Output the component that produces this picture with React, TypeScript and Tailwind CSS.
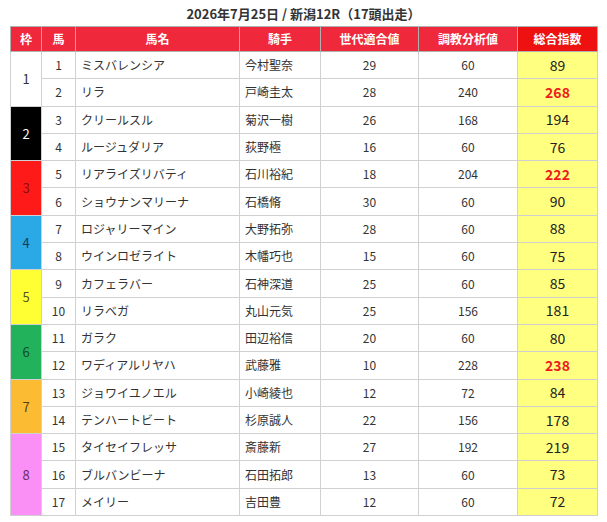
import React from "react";

type Row = { no: number; name: string; jockey: string; gen: number; train: number; total: number; hot?: boolean };

const frames: { waku: number; bg: string; fg: string; rows: Row[] }[] = [
  {
    waku: 1, bg: "bg-white", fg: "text-[#333]",
    rows: [
      { no: 1, name: "ミスバレンシア", jockey: "今村聖奈", gen: 29, train: 60, total: 89 },
      { no: 2, name: "リラ", jockey: "戸崎圭太", gen: 28, train: 240, total: 268, hot: true },
    ],
  },
  {
    waku: 2, bg: "bg-black", fg: "text-white",
    rows: [
      { no: 3, name: "クリールスル", jockey: "菊沢一樹", gen: 26, train: 168, total: 194 },
      { no: 4, name: "ルージュダリア", jockey: "荻野極", gen: 16, train: 60, total: 76 },
    ],
  },
  {
    waku: 3, bg: "bg-[#ff1a1a]", fg: "text-[#8a1010]",
    rows: [
      { no: 5, name: "リアライズリバティ", jockey: "石川裕紀", gen: 18, train: 204, total: 222, hot: true },
      { no: 6, name: "ショウナンマリーナ", jockey: "石橋脩", gen: 30, train: 60, total: 90 },
    ],
  },
  {
    waku: 4, bg: "bg-[#2aa9e6]", fg: "text-[#1d3a55]",
    rows: [
      { no: 7, name: "ロジャリーマイン", jockey: "大野拓弥", gen: 28, train: 60, total: 88 },
      { no: 8, name: "ウインロゼライト", jockey: "木幡巧也", gen: 15, train: 60, total: 75 },
    ],
  },
  {
    waku: 5, bg: "bg-[#ffff33]", fg: "text-[#555522]",
    rows: [
      { no: 9, name: "カフェラバー", jockey: "石神深道", gen: 25, train: 60, total: 85 },
      { no: 10, name: "リラベガ", jockey: "丸山元気", gen: 25, train: 156, total: 181 },
    ],
  },
  {
    waku: 6, bg: "bg-[#22b25c]", fg: "text-[#124a2a]",
    rows: [
      { no: 11, name: "ガラク", jockey: "田辺裕信", gen: 20, train: 60, total: 80 },
      { no: 12, name: "ワディアルリヤハ", jockey: "武藤雅", gen: 10, train: 228, total: 238, hot: true },
    ],
  },
  {
    waku: 7, bg: "bg-[#fbbc34]", fg: "text-[#5a4010]",
    rows: [
      { no: 13, name: "ジョワイユノエル", jockey: "小崎綾也", gen: 12, train: 72, total: 84 },
      { no: 14, name: "テンハートビート", jockey: "杉原誠人", gen: 22, train: 156, total: 178 },
    ],
  },
  {
    waku: 8, bg: "bg-[#fa90f6]", fg: "text-[#6a2a6a]",
    rows: [
      { no: 15, name: "タイセイフレッサ", jockey: "斎藤新", gen: 27, train: 192, total: 219 },
      { no: 16, name: "ブルバンビーナ", jockey: "石田拓郎", gen: 13, train: 60, total: 73 },
      { no: 17, name: "メイリー", jockey: "吉田豊", gen: 12, train: 60, total: 72 },
    ],
  },
];

const cell = "border border-[#d0d0d0] h-[27.3px] p-0";

export default function App() {
  return (
    <div className="w-[607px] h-[522px] bg-white font-['Noto_Sans_CJK_JP','Noto_Sans',sans-serif] text-[#333]">
      <h2 className="text-center font-bold text-[13px] leading-[20px] pt-[4px] h-[26px] text-[#333]">
        2026年7月25日 / 新潟12R（17頭出走）
      </h2>
      <table className="ml-[10px] w-[587px] border-collapse table-fixed text-[12px]">
        <colgroup>
          <col className="w-[31px]" />
          <col className="w-[34px]" />
          <col className="w-[164px]" />
          <col className="w-[81px]" />
          <col className="w-[98px]" />
          <col className="w-[99px]" />
          <col className="w-[80px]" />
        </colgroup>
        <thead>
          <tr className="h-[25px] text-white font-bold text-[12px]">
            <th className="border border-[#b0b0b0] bg-[#f0283c]">枠</th>
            <th className="border border-[#b0b0b0] bg-[#f0283c]">馬</th>
            <th className="border border-[#b0b0b0] bg-[#f0283c]">馬名</th>
            <th className="border border-[#b0b0b0] bg-[#f0283c]">騎手</th>
            <th className="border border-[#b0b0b0] bg-[#f0283c]">世代適合値</th>
            <th className="border border-[#b0b0b0] bg-[#f0283c]">調教分析値</th>
            <th className="border border-[#b0b0b0] bg-[#ee1111]">総合指数</th>
          </tr>
        </thead>
        <tbody>
          {frames.map((f) =>
            f.rows.map((r, i) => (
              <tr key={r.no}>
                {i === 0 && (
                  <td rowSpan={f.rows.length} className={`${cell} ${f.bg} ${f.fg} text-center text-[13px]`}>
                    {f.waku}
                  </td>
                )}
                <td className={`${cell} text-center`}>{r.no}</td>
                <td className={`${cell} pl-[5px]`}>{r.name}</td>
                <td className={`${cell} pl-[5px]`}>{r.jockey}</td>
                <td className={`${cell} text-center`}>{r.gen}</td>
                <td className={`${cell} text-center`}>{r.train}</td>
                <td
                  className={`${cell} bg-[#ffff80] text-center text-[14px] ${
                    r.hot ? "text-[#ee1c1c] font-bold" : "text-[#222]"
                  }`}
                >
                  {r.total}
                </td>
              </tr>
            ))
          )}
        </tbody>
      </table>
    </div>
  );
}
